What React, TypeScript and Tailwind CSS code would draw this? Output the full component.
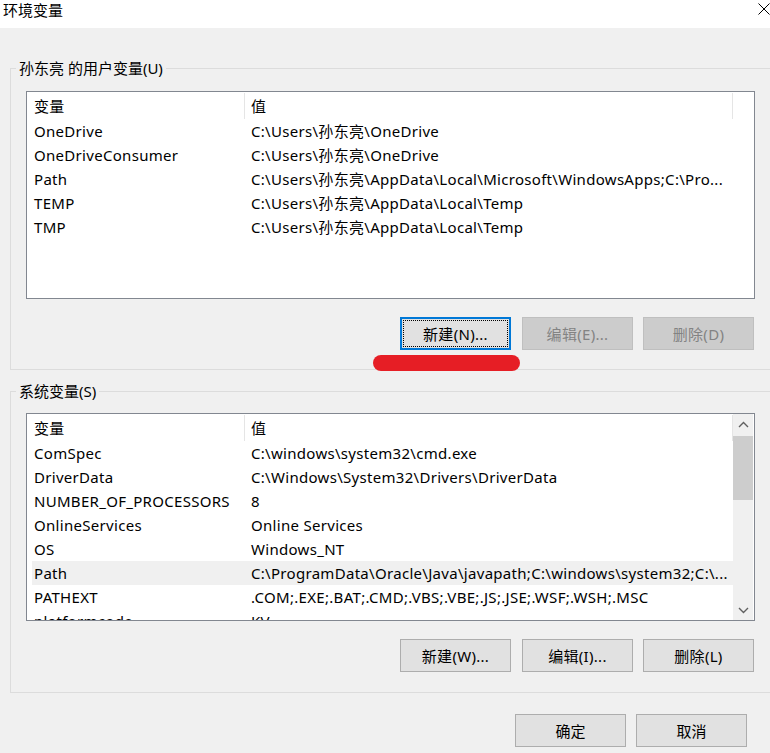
import React from "react";

type Row = { name: string; value: string; selected?: boolean };

const userRows: Row[] = [
  { name: "OneDrive", value: "C:\\Users\\孙东亮\\OneDrive" },
  { name: "OneDriveConsumer", value: "C:\\Users\\孙东亮\\OneDrive" },
  { name: "Path", value: "C:\\Users\\孙东亮\\AppData\\Local\\Microsoft\\WindowsApps;C:\\Pro..." },
  { name: "TEMP", value: "C:\\Users\\孙东亮\\AppData\\Local\\Temp" },
  { name: "TMP", value: "C:\\Users\\孙东亮\\AppData\\Local\\Temp" },
];

const sysRows: Row[] = [
  { name: "ComSpec", value: "C:\\windows\\system32\\cmd.exe" },
  { name: "DriverData", value: "C:\\Windows\\System32\\Drivers\\DriverData" },
  { name: "NUMBER_OF_PROCESSORS", value: "8" },
  { name: "OnlineServices", value: "Online Services" },
  { name: "OS", value: "Windows_NT" },
  { name: "Path", value: "C:\\ProgramData\\Oracle\\Java\\javapath;C:\\windows\\system32;C:\\...", selected: true },
  { name: "PATHEXT", value: ".COM;.EXE;.BAT;.CMD;.VBS;.VBE;.JS;.JSE;.WSF;.WSH;.MSC" },
  { name: "platformcode", value: "KV" },
];

function Btn({ label, kind = "normal", className = "" }: { label: string; kind?: "normal" | "disabled" | "focused"; className?: string }) {
  if (kind === "focused") {
    return (
      <div className={`w-[111px] h-[33px] border-2 border-[#0078d7] bg-[#e1e1e1] p-px ${className}`}>
        <div className="w-full h-full border border-dotted border-black flex items-center justify-center text-black">{label}</div>
      </div>
    );
  }
  if (kind === "disabled") {
    return (
      <div className={`w-[111px] h-[33px] border border-[#bfbfbf] bg-[#cccccc] flex items-center justify-center text-[#838383] ${className}`}>
        {label}
      </div>
    );
  }
  return (
    <div className={`w-[111px] h-[33px] border border-[#adadad] bg-[#e1e1e1] flex items-center justify-center text-black ${className}`}>
      {label}
    </div>
  );
}

function Chevron({ up }: { up: boolean }) {
  return (
    <svg width="11" height="7" viewBox="0 0 11 7">
      <path d={up ? "M1 6 L5.5 1.5 L10 6" : "M1 1 L5.5 5.5 L10 1"} fill="none" stroke="#606060" strokeWidth="1.4" />
    </svg>
  );
}

function ListBox({ rows, scroll }: { rows: Row[]; scroll?: boolean }) {
  return (
    <div className="ml-[15px] w-[729px] h-[208px] border border-[#828790] bg-white flex overflow-hidden tracking-[0.3px]">
      <div className="w-[706px] pl-[5px] flex flex-col overflow-hidden">
        <div className="h-[27px] shrink-0 flex">
          <div className="w-[212px] pl-[2px] flex items-center">变量</div>
          <div className="w-px h-[26px] mt-px bg-[#e5e5e5]" />
          <div className="w-[487px] pl-[6px] flex items-center">值</div>
          <div className="w-px h-[26px] mt-px bg-[#e5e5e5]" />
        </div>
        {rows.map((r) => (
          <div key={r.name} className={`h-[24px] shrink-0 w-[701px] flex items-center whitespace-nowrap ${r.selected ? "bg-[#f0f0f0]" : ""}`}>
            <div className="w-[212px] pl-[2px]">{r.name}</div>
            <div className="w-px" />
            <div className="w-[487px] pl-[6px] overflow-hidden">{r.value}</div>
          </div>
        ))}
      </div>
      {scroll && (
        <div className="w-[20px] h-full bg-[#f0f0f0] flex flex-col">
          <div className="h-[20px] shrink-0 flex items-center justify-center"><Chevron up /></div>
          <div className="mt-[2px] h-[64px] shrink-0 bg-[#cdcdcd]" />
          <div className="flex-1" />
          <div className="h-[20px] shrink-0 flex items-center justify-center"><Chevron up={false} /></div>
        </div>
      )}
    </div>
  );
}

export default function App() {
  return (
    <div className="relative w-[770px] h-[753px] bg-[#f0f0f0] overflow-hidden text-[15px] leading-[20px] text-black font-['Noto_Sans','Noto_Sans_CJK_SC',sans-serif]">
      <div className="h-[28px] bg-white flex items-start justify-between">
        <div className="pl-[3px] pt-0">环境变量</div>
        <svg width="12" height="12" viewBox="0 0 12 12" className="mt-[3px]">
          <path d="M0.5 0.5 L11.5 11.5 M11.5 0.5 L0.5 11.5" stroke="#000" strokeWidth="1" />
        </svg>
      </div>

      <div className="pl-[10px]">
        <fieldset className="mt-[30px] w-[770px] border border-[#dcdcdc] p-0 pb-[19px]">
          <legend className="ml-[5px] px-[3px] leading-[20px]">孙东亮 的用户变量(U)</legend>
          <div className="mt-[13px]">
            <ListBox rows={userRows} />
          </div>
          <div className="mt-[18px] ml-[15px] w-[728px] flex justify-end tracking-[0.3px]">
            <Btn label="新建(N)..." kind="focused" />
            <Btn label="编辑(E)..." kind="disabled" className="ml-[11px]" />
            <Btn label="删除(D)" kind="disabled" className="ml-[10px]" />
          </div>
        </fieldset>

        <fieldset className="mt-[11px] w-[770px] border border-[#dcdcdc] p-0 pb-[20px]">
          <legend className="ml-[5px] px-[3px] leading-[20px]">系统变量(S)</legend>
          <div className="mt-[12px]">
            <ListBox rows={sysRows} scroll />
          </div>
          <div className="mt-[18px] ml-[15px] w-[728px] flex justify-end tracking-[0.3px]">
            <Btn label="新建(W)..." />
            <Btn label="编辑(I)..." className="ml-[11px]" />
            <Btn label="删除(L)" className="ml-[10px]" />
          </div>
        </fieldset>
      </div>

      <div className="mt-[21px] pr-[23px] flex justify-end">
        <Btn label="确定" />
        <Btn label="取消" className="ml-[10px]" />
      </div>

      <div className="absolute left-[373px] top-[355px] w-[147px] h-[16px] rounded-full bg-[#e61e25]" />
    </div>
  );
}
